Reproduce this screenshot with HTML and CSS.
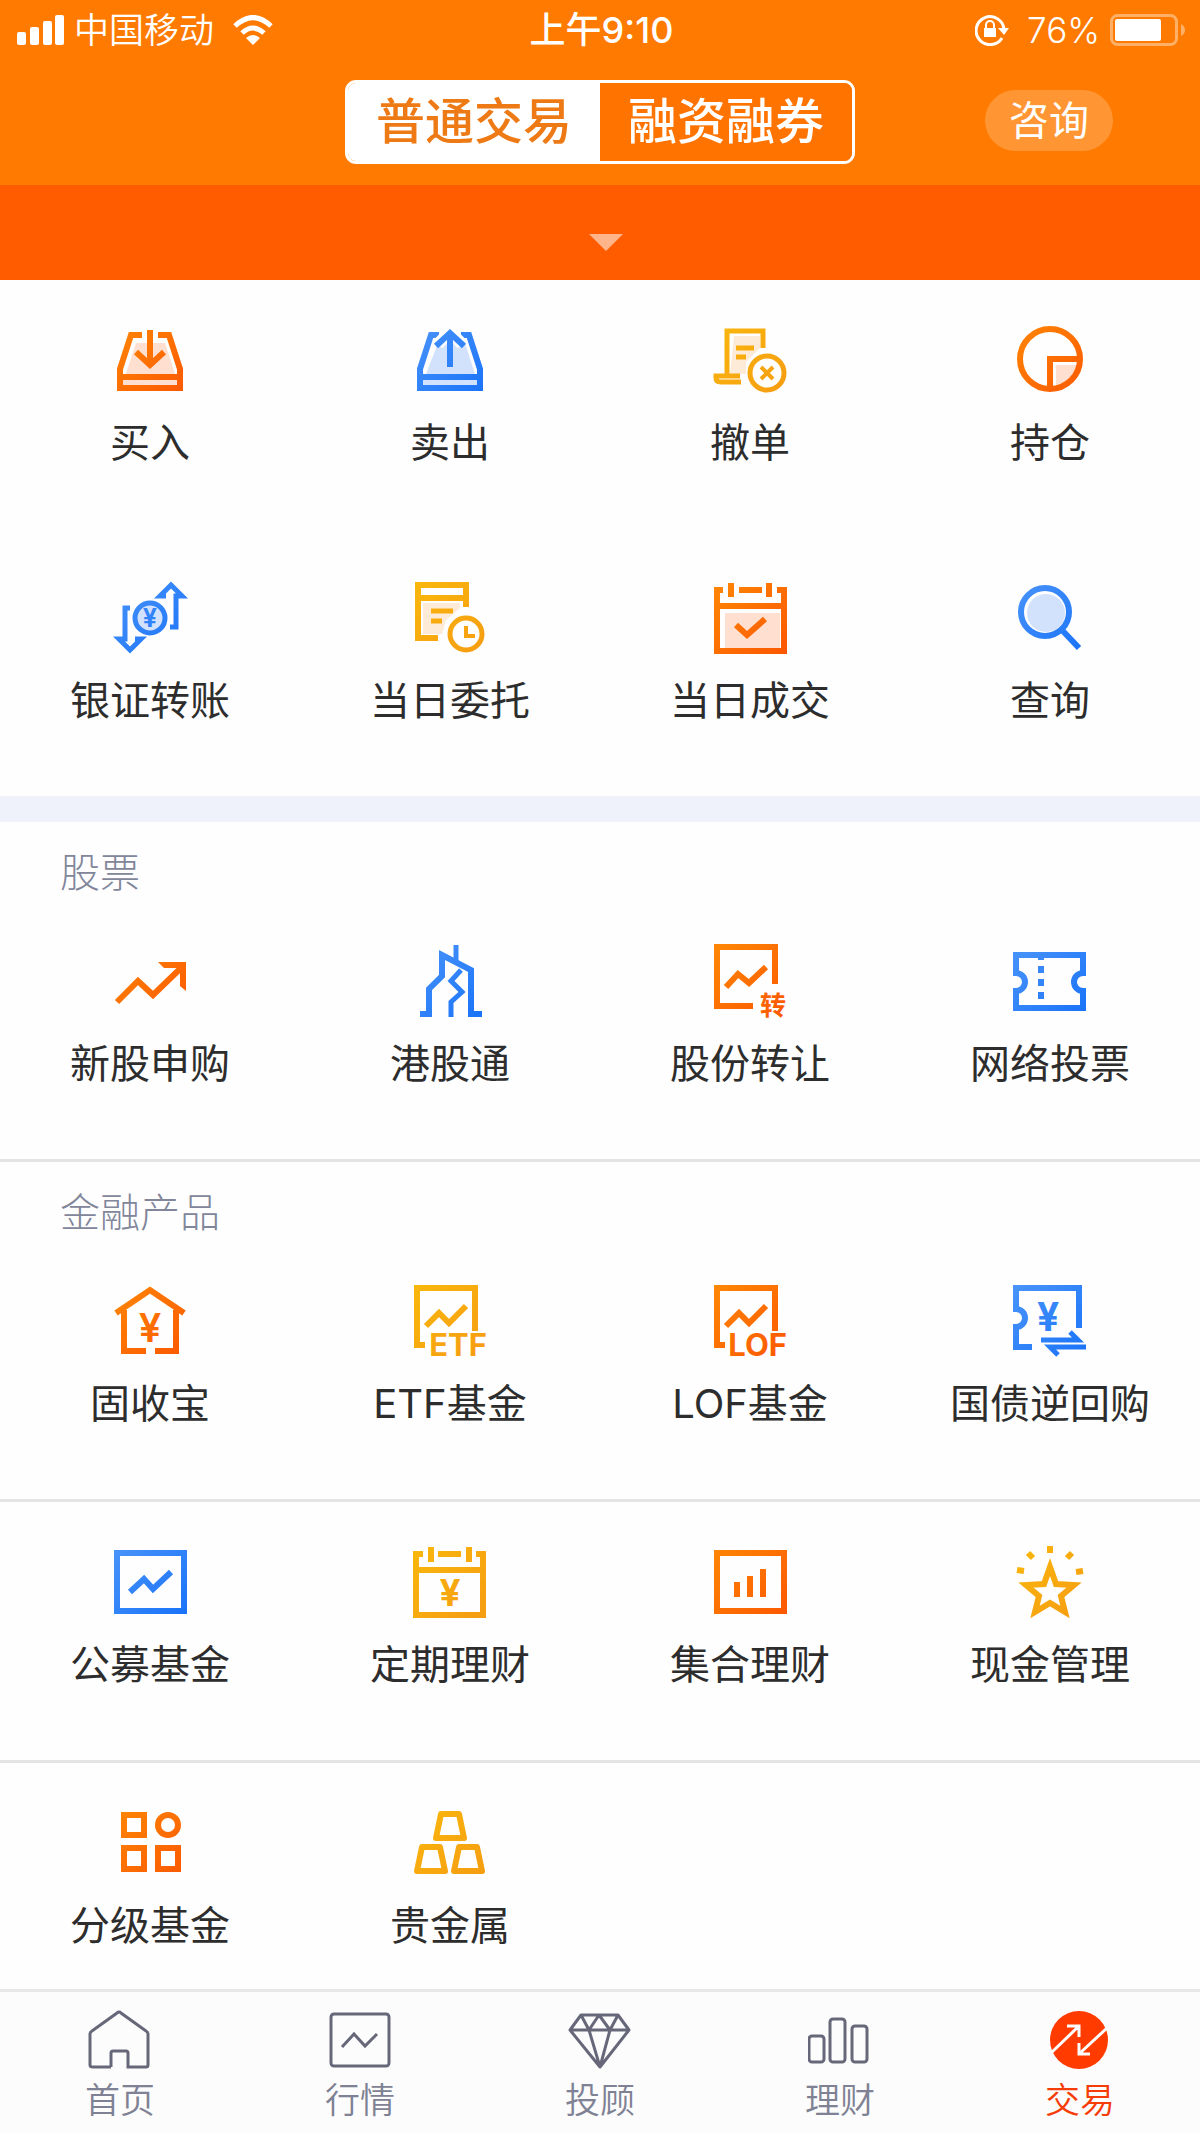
FILE: index.html
```html
<!DOCTYPE html>
<html lang="zh-CN">
<head>
<meta charset="utf-8">
<meta name="viewport" content="width=device-width, initial-scale=1">
<title>交易</title>
<link rel="stylesheet" href="styles.css">
</head>
<body>
<svg class="defs" width="0" height="0" aria-hidden="true">
  <defs>
    <linearGradient id="orange" gradientUnits="userSpaceOnUse" x1="0" y1="0" x2="80" y2="80"><stop offset="0" stop-color="#ff8a05"/><stop offset="1" stop-color="#fb5400"/></linearGradient>
    <linearGradient id="blue" gradientUnits="userSpaceOnUse" x1="0" y1="0" x2="80" y2="80"><stop offset="0" stop-color="#4d96fa"/><stop offset="1" stop-color="#1570f8"/></linearGradient>
    <linearGradient id="gold" gradientUnits="userSpaceOnUse" x1="0" y1="0" x2="80" y2="80"><stop offset="0" stop-color="#fab90c"/><stop offset="1" stop-color="#f59a12"/></linearGradient>
  </defs>
</svg>

<header class="header">
  <div class="status">
    <div class="status-side">
      <svg class="signal" width="47" height="30" viewBox="0 0 47 30" fill="#fff" aria-hidden="true"><rect y="17" width="9" height="13" rx="2"/><rect x="13" y="12" width="9" height="18" rx="2"/><rect x="26" y="6" width="9" height="24" rx="2"/><rect x="38" width="9" height="30" rx="2"/></svg>
      <span class="carrier">中国移动</span>
      <svg width="42" height="30" viewBox="0 0 42 30" aria-hidden="true"><path d="M3 11Q21 -6 39 11M10 18Q21 8 32 18" fill="none" stroke="#fff" stroke-width="5"/><path d="M14 23Q21 17 28 23L21 30Z" fill="#fff"/></svg>
    </div>
    <time class="clock">上午9:10</time>
    <div class="status-side status-right">
      <svg class="lock" width="34" height="32" viewBox="0 0 34 32" aria-hidden="true"><path d="M27 24A14 14 0 1 1 29 15" fill="none" stroke="#fff" stroke-width="3"/><path d="M23 14H34L29 21Z" fill="#fff"/><rect x="9" y="14" width="12" height="9" fill="#fff"/><path d="M11 15V11A4 4 0 0 1 19 11V15" fill="none" stroke="#fff" stroke-width="2"/></svg>
      <span>76%</span>
      <svg class="battery" width="76" height="32" viewBox="0 0 76 32" aria-hidden="true"><rect x="1.500" y="1.500" width="65" height="29" rx="6" fill="none" stroke="#ffb066" stroke-width="3"/><rect x="5" y="5" width="46" height="22" rx="2" fill="#fff"/><path d="M71 10Q75 12 75 16Q75 20 71 22Z" fill="#ffb066"/></svg>
    </div>
  </div>
  <div class="modes">
    <div class="segment">
      <button class="segment-item segment-on" type="button">普通交易</button>
      <button class="segment-item" type="button">融资融券</button>
    </div>
    <button class="consult" type="button">咨询</button>
  </div>
</header>

<button class="expand" type="button" aria-label="展开"><svg width="34" height="17" viewBox="0 0 34 17"><path d="M0 0H34L17 17Z" fill="#ffb489"/></svg></button>

<main class="main">
  <section class="grid">
    <a class="tile" href="#"><svg class="icon orange" viewBox="0 0 80 80"><path class="tint" d="M26 23H55L65 54H16ZM13 60H67V65H13Z"/><path d="M32 15H21L10 49V68H70V49L59 15H48M10 57H70M40 10V45M26 32L40 45L54 32"/></svg><span>买入</span></a>
    <a class="tile" href="#"><svg class="icon blue" viewBox="0 0 80 80"><path class="tint" d="M28 23H55L65 54H16ZM13 60H67V65H13Z"/><path d="M29 15H21L10 49V68H70V49L59 15H51M10 57H70"/><path class="halo" d="M28 24L40 12L52 24"/><path d="M40 13V47M26 26L40 13L54 26"/></svg><span>卖出</span></a>
    <a class="tile" href="#"><svg class="icon gold thin" viewBox="0 0 80 80"><path class="tint" d="M24 16H50V28L36 42V54H20Z"/><path d="M17 55V11H53V28M30 56H6V58Q6 62 11 62H31M26 28H44M26 37H36"/><circle cx="57" cy="53" r="17"/><path class="hair" d="M51 47L63 59M63 47L51 59"/></svg><span>撤单</span></a>
    <a class="tile" href="#"><svg class="icon orange" viewBox="0 0 80 80"><path class="tint" d="M46 45H67Q64 60 46 66Z"/><circle cx="40" cy="39" r="30"/><path d="M70 39H40V69"/></svg><span>持仓</span></a>
    <a class="tile" href="#"><svg class="icon blue thin" viewBox="0 0 80 80"><circle class="tint" cx="40" cy="40" r="14"/><circle cx="40" cy="40" r="15"/><path d="M56 18H50L61 7L72 18H66V49H60M20 30H15V61H9L20 72L31 61H25"/><text x="40" y="49" font-size="25" text-anchor="middle">¥</text></svg><span>银证转账</span></a>
    <a class="tile" href="#"><svg class="icon gold" viewBox="0 0 80 80"><path class="tint" d="M13 25H50V30L36 42L32 56H13Z"/><path d="M28 60H8V7H56V29M8 20H56"/><path class="fine" d="M21 33H43M21 43H32"/><path class="hair" d="M56 48V58H65"/><circle class="fine" cx="56" cy="56" r="16"/></svg><span>当日委托</span></a>
    <a class="tile" href="#"><svg class="icon orange" viewBox="0 0 80 80"><path class="tint" d="M15 35H70V70H15Z"/><path d="M13 12H7V73H74V12H67M7 28H74M29 12H52M21 5V19M59 5V19M26 47L37 57L55 41"/></svg><span>当日成交</span></a>
    <a class="tile" href="#"><svg class="icon blue" viewBox="0 0 80 80"><circle class="tint" cx="36" cy="35" r="19"/><circle cx="35" cy="34" r="24"/><path d="M51 51L69 70"/></svg><span>查询</span></a>
  </section>

  <div class="band"></div>

  <section>
    <h2 class="title">股票</h2>
    <div class="grid">
      <a class="tile" href="#"><svg class="icon orange" viewBox="0 0 80 80"><path d="M7 61L28 40L43 54L73 25"/><path class="solid" d="M48 21H76V50L70 45V27H54Z"/></svg><span>新股申购</span></a>
      <a class="tile" href="#"><svg class="icon blue" viewBox="0 0 80 80"><path d="M10 73H19V48L32 35V14L61 29V73H72"/><path class="fine" d="M46 4V20M51 29L41 40L52 51L41 61V76"/></svg><span>港股通</span></a>
      <a class="tile" href="#"><svg class="icon orange" viewBox="0 0 80 80"><path d="M43 65H7V6H65V43M16 46L28 33L39 42L56 26"/><text x="63" y="74" font-size="26" text-anchor="middle">转</text></svg><span>股份转让</span></a>
      <a class="tile" href="#"><svg class="icon blue" viewBox="0 0 80 80"><path d="M6 14V32A9 9 0 0 1 6 50V67H73V50A9 9 0 0 1 73 32V14Z"/><path d="M31 14V19M31 25V32M31 38V45M31 51V58M31 64V67"/></svg><span>网络投票</span></a>
    </div>
  </section>

  <section class="ruled">
    <h2 class="title">金融产品</h2>
    <div class="grid">
      <a class="tile" href="#"><svg class="icon orange" viewBox="0 0 80 80"><path d="M6 32L40 9L74 32M36 70H14V29M45 70H66V29"/><text class="yen" x="40" y="61" font-size="40" text-anchor="middle">¥</text></svg><span>固收宝</span></a>
      <a class="tile" href="#"><svg class="icon gold" viewBox="0 0 80 80"><path d="M15 64H7V7H65V50M16 45L29 32L39 42L56 25"/><text x="77" y="75" font-size="31" text-anchor="end">ETF</text></svg><span>ETF基金</span></a>
      <a class="tile" href="#"><svg class="icon orange" viewBox="0 0 80 80"><path d="M15 64H7V7H65V50M16 45L29 32L39 42L56 25"/><text x="77" y="75" font-size="31" text-anchor="end">LOF</text></svg><span>LOF基金</span></a>
      <a class="tile" href="#"><svg class="icon blue" viewBox="0 0 80 80"><path d="M22 66H6V46A9 9 0 0 0 6 28V7H69V47"/><path class="fine" d="M31 59H68L60 51M76 66H40L48 74"/><text x="38" y="50" font-size="39" text-anchor="middle">¥</text></svg><span>国债逆回购</span></a>
    </div>
  </section>

  <section class="grid ruled">
    <a class="tile" href="#"><svg class="icon blue" viewBox="0 0 80 80"><path d="M7 11H74V69H7ZM20 50L34 37L43 47L61 30"/></svg><span>公募基金</span></a>
    <a class="tile" href="#"><svg class="icon gold" viewBox="0 0 80 80"><path d="M13 12H6V73H73V12H66M6 28H73M28 12H51M21 5V20M59 5V20"/><text x="40" y="64" font-size="37" text-anchor="middle">¥</text></svg><span>定期理财</span></a>
    <a class="tile" href="#"><svg class="icon orange" viewBox="0 0 80 80"><path d="M7 11H74V69H7ZM27 40V55M40 34V55M53 27V55"/></svg><span>集合理财</span></a>
    <a class="tile" href="#"><svg class="icon gold" viewBox="0 0 80 80"><path d="M40 25L46 42L64 43L51 54L55 70L40 61L25 70L29 54L16 43L34 42Z" stroke-miterlimit="10"/><path d="M40 4V11M18 11L23 16M62 11L57 16M7 28L14 29M73 29L66 30"/></svg><span>现金管理</span></a>
  </section>

  <section class="grid grid-last ruled">
    <a class="tile" href="#"><svg class="icon orange" viewBox="0 0 80 80"><path d="M14 12H34V32H14ZM14 45H34V66H14ZM48 45H68V66H48Z"/><circle cx="58" cy="22" r="10"/></svg><span>分级基金</span></a>
    <a class="tile" href="#"><svg class="icon gold" viewBox="0 0 80 80" stroke-linejoin="round"><path d="M26 35L31 11H49L54 35ZM7 68L12 44H30L35 68ZM44 68L49 44H67L72 68Z"/></svg><span>贵金属</span></a>
  </section>
</main>

<nav class="tabbar">
  <a class="tab" href="#"><svg class="tab-icon" viewBox="0 0 64 64"><path d="M23 59V45Q23 43 25 43H38Q40 43 40 45V59H58Q60 59 60 57V26Q60 24 58 23L33 5Q31 3 29 5L4 23Q2 24 2 26V57Q2 59 5 59H23"/></svg><span>首页</span></a>
  <a class="tab" href="#"><svg class="tab-icon" viewBox="0 0 64 64"><rect x="3" y="6" width="58" height="52" rx="3"/><path d="M14 39L26 26L37 38L49 26"/></svg><span>行情</span></a>
  <a class="tab" href="#"><svg class="tab-icon" viewBox="0 0 64 64" stroke-linejoin="round"><path d="M13 7H50L61 22L32 59L2 22ZM2 22H61M13 7L21 22L31 7L42 22L50 7M21 22L32 59L42 22"/></svg><span>投顾</span></a>
  <a class="tab" href="#"><svg class="tab-icon" viewBox="0 0 64 64"><rect x="1" y="28" width="15" height="26" rx="3"/><rect x="22" y="11" width="15" height="43" rx="3"/><rect x="44" y="18" width="15" height="36" rx="3"/></svg><span>理财</span></a>
  <a class="tab tab-on" href="#" aria-current="page"><svg class="tab-icon" viewBox="0 0 64 64"><circle cx="31" cy="32" r="29" fill="#ff3b00" stroke="none"/><path d="M3 45L31 18M19 18H31V29M31 35V46H42M31 46L59 20" stroke="#fff"/></svg><span>交易</span></a>
</nav>
</body>
</html>
```
FILE: styles.css
```css
* {
  box-sizing: border-box;
}

body {
  margin: 0;
  min-height: 100vh;
  display: flex;
  flex-direction: column;
  background: #fefefe;
  color: #2d2d2d;
  font-family: "Inter", "Noto Sans CJK SC", sans-serif;
}

a {
  color: inherit;
  text-decoration: none;
}

button {
  border: 0;
  padding: 0;
  font-family: inherit;
}

svg {
  display: block;
  flex: none;
}

.defs {
  position: absolute;
}

/* Header */
.header {
  background: #ff7a00;
  color: #fff;
}

.status {
  display: grid;
  grid-template-columns: 1fr auto 1fr;
  align-items: center;
  height: 60px;
  padding: 0 14px 0 17px;
  font-size: 35px;
  line-height: 48px;
}

.status-side {
  display: flex;
  align-items: center;
  font-weight: 350;
}

.status-right {
  justify-content: flex-end;
}

.carrier {
  margin: 0 18px 0 10px;
}

.clock {
  font-weight: 500;
  font-size: 36px;
}

.lock {
  margin-right: 18px;
}

.battery {
  margin-left: 10px;
}

.modes {
  display: grid;
  grid-template-columns: 1fr auto 1fr;
  align-items: center;
  padding: 20px 0 21px;
}

.segment {
  grid-column: 2;
  display: flex;
  width: 510px;
  height: 84px;
  border: 3px solid #fff;
  border-radius: 11px;
  overflow: hidden;
}

.segment-item {
  flex: 1;
  background: #ff7300;
  color: #fff;
  font-size: 49px;
  font-weight: 500;
  line-height: 72px;
}

.segment-on {
  background: #fff;
  color: #ee7a16;
}

.consult {
  justify-self: end;
  width: 128px;
  height: 61px;
  margin: 0 87px 3px 0;
  border-radius: 31px;
  background: #ff9633;
  color: #fff;
  font-size: 40px;
  line-height: 56px;
}

.expand {
  display: flex;
  justify-content: center;
  align-items: flex-end;
  height: 95px;
  padding: 0 0 29px 12px;
  background: #ff5c00;
}

/* Feature grid */
.main {
  flex: 1;
}

.band {
  height: 26px;
  background: #f0f2fb;
}

.ruled {
  border-top: 3px solid #e4e4e4;
}

.title {
  margin: 0;
  padding: 23px 60px 0;
  color: #81869a;
  font-size: 40px;
  font-weight: 300;
  line-height: 56px;
}

.grid {
  display: grid;
  grid-template-columns: repeat(4, 1fr);
}

.tile {
  display: flex;
  flex-direction: column;
  align-items: center;
  gap: 15px;
  padding: 40px 0 67px;
  font-size: 40px;
  font-weight: 400;
  line-height: 56px;
  white-space: nowrap;
}

.grid-last .tile {
  padding-bottom: 35px;
}

/* Icons */
.icon {
  width: 80px;
  height: 80px;
  overflow: visible;
  fill: none;
  stroke: var(--ink);
  stroke-width: 6px;
  font-weight: 700;
}

.icon .tint {
  fill: var(--tint);
  stroke: none;
}

.icon text,
.icon .solid {
  fill: var(--ink);
  stroke: none;
}

.icon .yen {
  font-weight: 600;
}

.icon .halo {
  stroke: #fefefe;
  stroke-width: 12px;
}

.icon .fine,
.thin {
  stroke-width: 5px;
}

.icon .hair {
  stroke-width: 4px;
}

.orange {
  --ink: url(#orange);
  --tint: #ffdfd0;
}

.blue {
  --ink: url(#blue);
  --tint: #d3e2fc;
}

.gold {
  --ink: url(#gold);
  --tint: #fdebd8;
}

/* Bottom navigation */
.tabbar {
  display: grid;
  grid-template-columns: repeat(5, 1fr);
  border-top: 3px solid #e8e8e8;
  background: #fcfcfc;
  color: #7f8294;
}

.tab {
  display: flex;
  flex-direction: column;
  align-items: center;
  gap: 4px;
  padding: 16px 0 9px;
  font-size: 35px;
  font-weight: 350;
  line-height: 48px;
}

.tab-on {
  color: #f63c08;
}

.tab-icon {
  width: 64px;
  height: 64px;
  fill: none;
  stroke: #666879;
  stroke-width: 3px;
}
```
